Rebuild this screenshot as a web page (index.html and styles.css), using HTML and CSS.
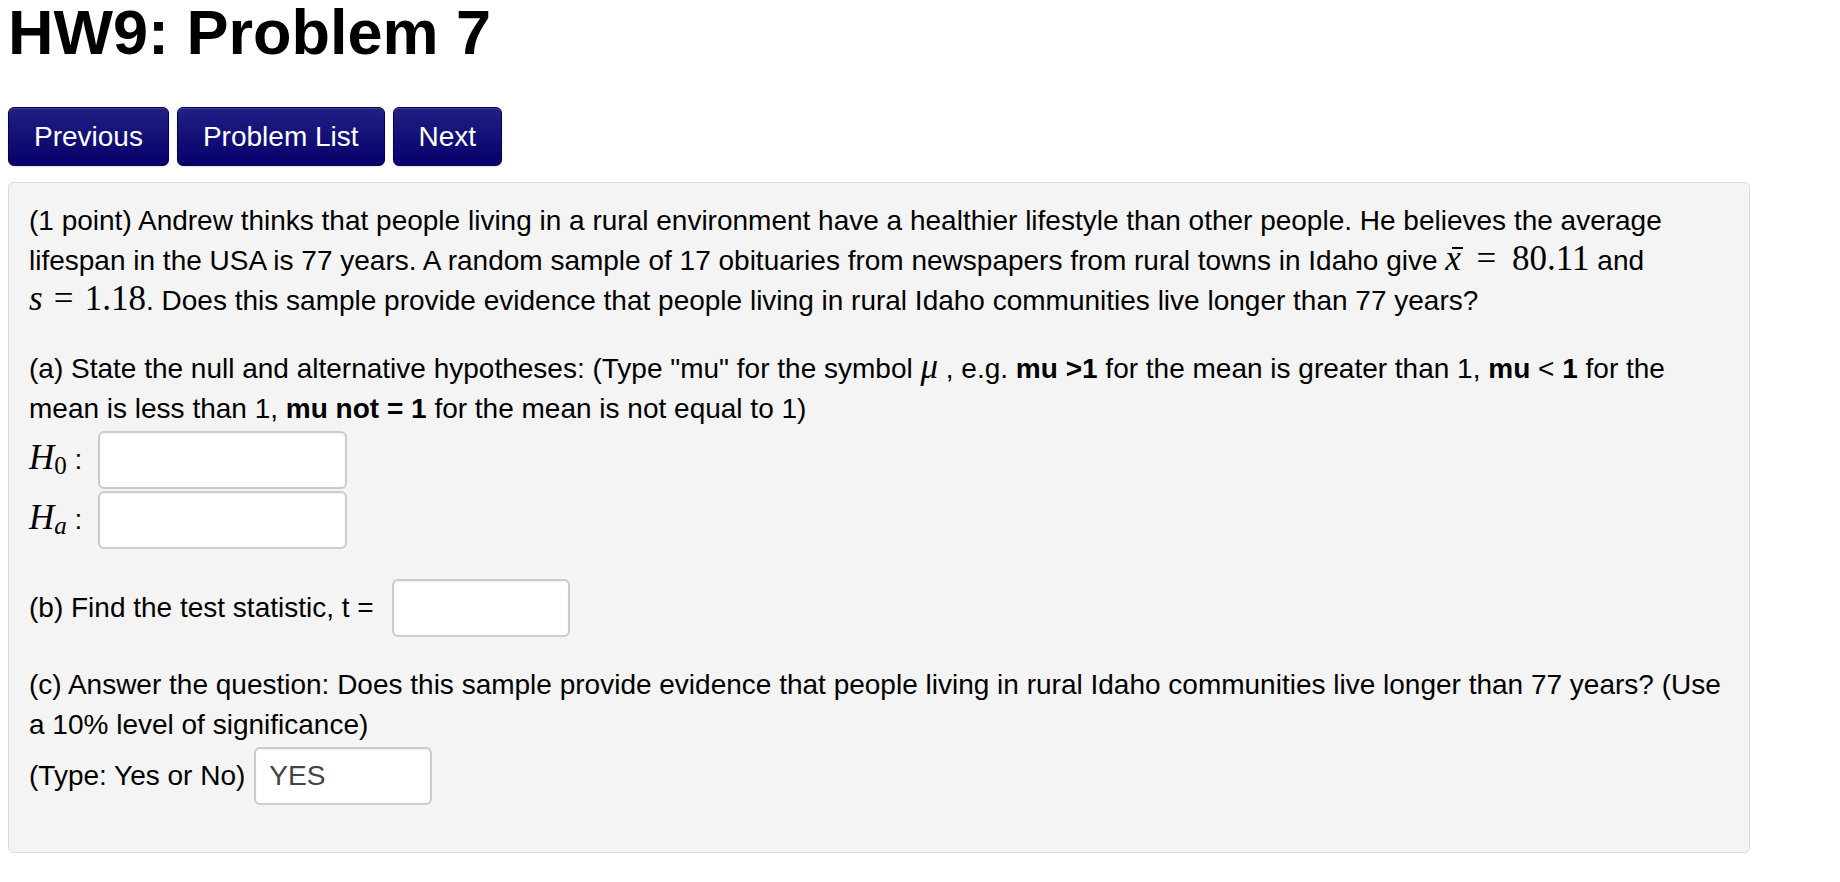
FILE: index.html
```html
<!DOCTYPE html>
<html>
<head>
<meta charset="utf-8">
<title>HW9: Problem 7</title>
<link rel="stylesheet" href="styles.css">
</head>
<body>
<div class="page">
  <h1 class="title">HW9: Problem 7</h1>
  <nav class="nav">
    <a class="btn">Previous</a>
    <a class="btn">Problem List</a>
    <a class="btn">Next</a>
  </nav>
  <div class="problem">
    <p class="para">(1 point) Andrew thinks that people living in a rural environment have a healthier lifestyle than other people. He believes the average lifespan in the USA is 77 years. A random sample of 17 obituaries from newspapers from rural towns in Idaho give <span class="math"><span class="mi xbar">x</span><span class="rel wide">=</span>80.11</span> and <span class="math"><span class="mi">s</span><span class="rel">=</span>1.18</span>. Does this sample provide evidence that people living in rural Idaho communities live longer than 77 years?</p>
    <p class="para gap">(a) State the null and alternative hypotheses: (Type "mu" for the symbol <span class="math"><span class="mi">μ</span></span> , e.g. <b>mu</b> <b>&gt;1</b> for the mean is greater than 1, <b>mu</b> &lt; <b>1</b> for the mean is less than 1, <b>mu not = 1</b> for the mean is not equal to 1)</p>
    <div class="ans-row">
      <span class="label"><span class="math"><span class="mi">H</span><span class="sub">0</span></span> :</span>
      <input class="ans ans-wide" type="text">
    </div>
    <div class="ans-row">
      <span class="label"><span class="math"><span class="mi">H</span><span class="sub mi">a</span></span> :</span>
      <input class="ans ans-wide" type="text">
    </div>
    <div class="ans-row row-gap row-b">
      <span class="label">(b) Find the test statistic, t =</span>
      <input class="ans ans-narrow" type="text">
    </div>
    <p class="para gap">(c) Answer the question: Does this sample provide evidence that people living in rural Idaho communities live longer than 77 years? (Use a 10% level of significance)</p>
    <div class="ans-row row-c">
      <span class="label">(Type: Yes or No)</span>
      <input class="ans ans-narrow" type="text" value="YES">
    </div>
  </div>
</div>
</body>
</html>
```

FILE: styles.css
```css
html, body {
  margin: 0;
  padding: 0;
  background: #ffffff;
}

body {
  font-family: "Liberation Sans", Arial, Helvetica, sans-serif;
  color: #000000;
}

.page {
  padding: 0 8px;
  width: 1742px;
}

.title {
  margin: 0;
  font-size: 63px;
  line-height: 64px;
  font-weight: bold;
}

.nav {
  display: flex;
  gap: 8px;
  margin-top: 43px;
}

.btn {
  box-sizing: border-box;
  height: 59px;
  padding: 0 25px;
  display: flex;
  align-items: center;
  font-size: 28px;
  color: #ffffff;
  background: linear-gradient(#202083, #07006b);
  border: 1px solid #06005a;
  border-radius: 6px;
  box-shadow: inset 0 1px 0 rgba(255, 255, 255, 0.15), 0 1px 2px rgba(0, 0, 0, 0.12);
  text-decoration: none;
  cursor: pointer;
}

.problem {
  margin-top: 16px;
  box-sizing: border-box;
  width: 1742px;
  background: #f4f4f4;
  border: 1px solid #dcdcdc;
  border-radius: 5px;
  padding: 18px 10px 47px 20px;
  font-size: 28px;
  line-height: 40px;
}

.para {
  margin: 0;
}

.para.gap {
  margin-top: 28px;
}

.math {
  font-family: "Liberation Serif", "Times New Roman", serif;
  font-size: 35px;
  line-height: 1;
  white-space: nowrap;
}

.mi {
  font-style: italic;
}

.rel {
  margin: 0 0.32em;
}

.rel.wide {
  margin: 0 0.45em;
}

.xbar {
  position: relative;
}

.xbar::before {
  content: "";
  position: absolute;
  left: 0.2em;
  width: 0.3em;
  top: 0.24em;
  height: 1.5px;
  background: currentColor;
}

.sub {
  font-size: 25px;
  position: relative;
  top: 5px;
}

.ans-row {
  display: flex;
  align-items: center;
  gap: 16px;
  margin-top: 2px;
}

.ans-row.row-gap {
  margin-top: 30px;
}

.ans-row.row-b {
  gap: 18px;
}

.ans-row.row-c {
  gap: 9px;
}

.label {
  white-space: nowrap;
}

.ans {
  box-sizing: border-box;
  height: 58px;
  margin: 0;
  border: 2px solid #cbcbcb;
  border-radius: 6px;
  background: #ffffff;
  box-shadow: inset 0 1px 2px rgba(0, 0, 0, 0.07);
  font-family: "Liberation Sans", Arial, Helvetica, sans-serif;
  font-size: 28px;
  color: #444444;
  padding: 0 13px;
  outline: none;
}

.ans-wide {
  width: 249px;
}

.ans-narrow {
  width: 178px;
}
```
